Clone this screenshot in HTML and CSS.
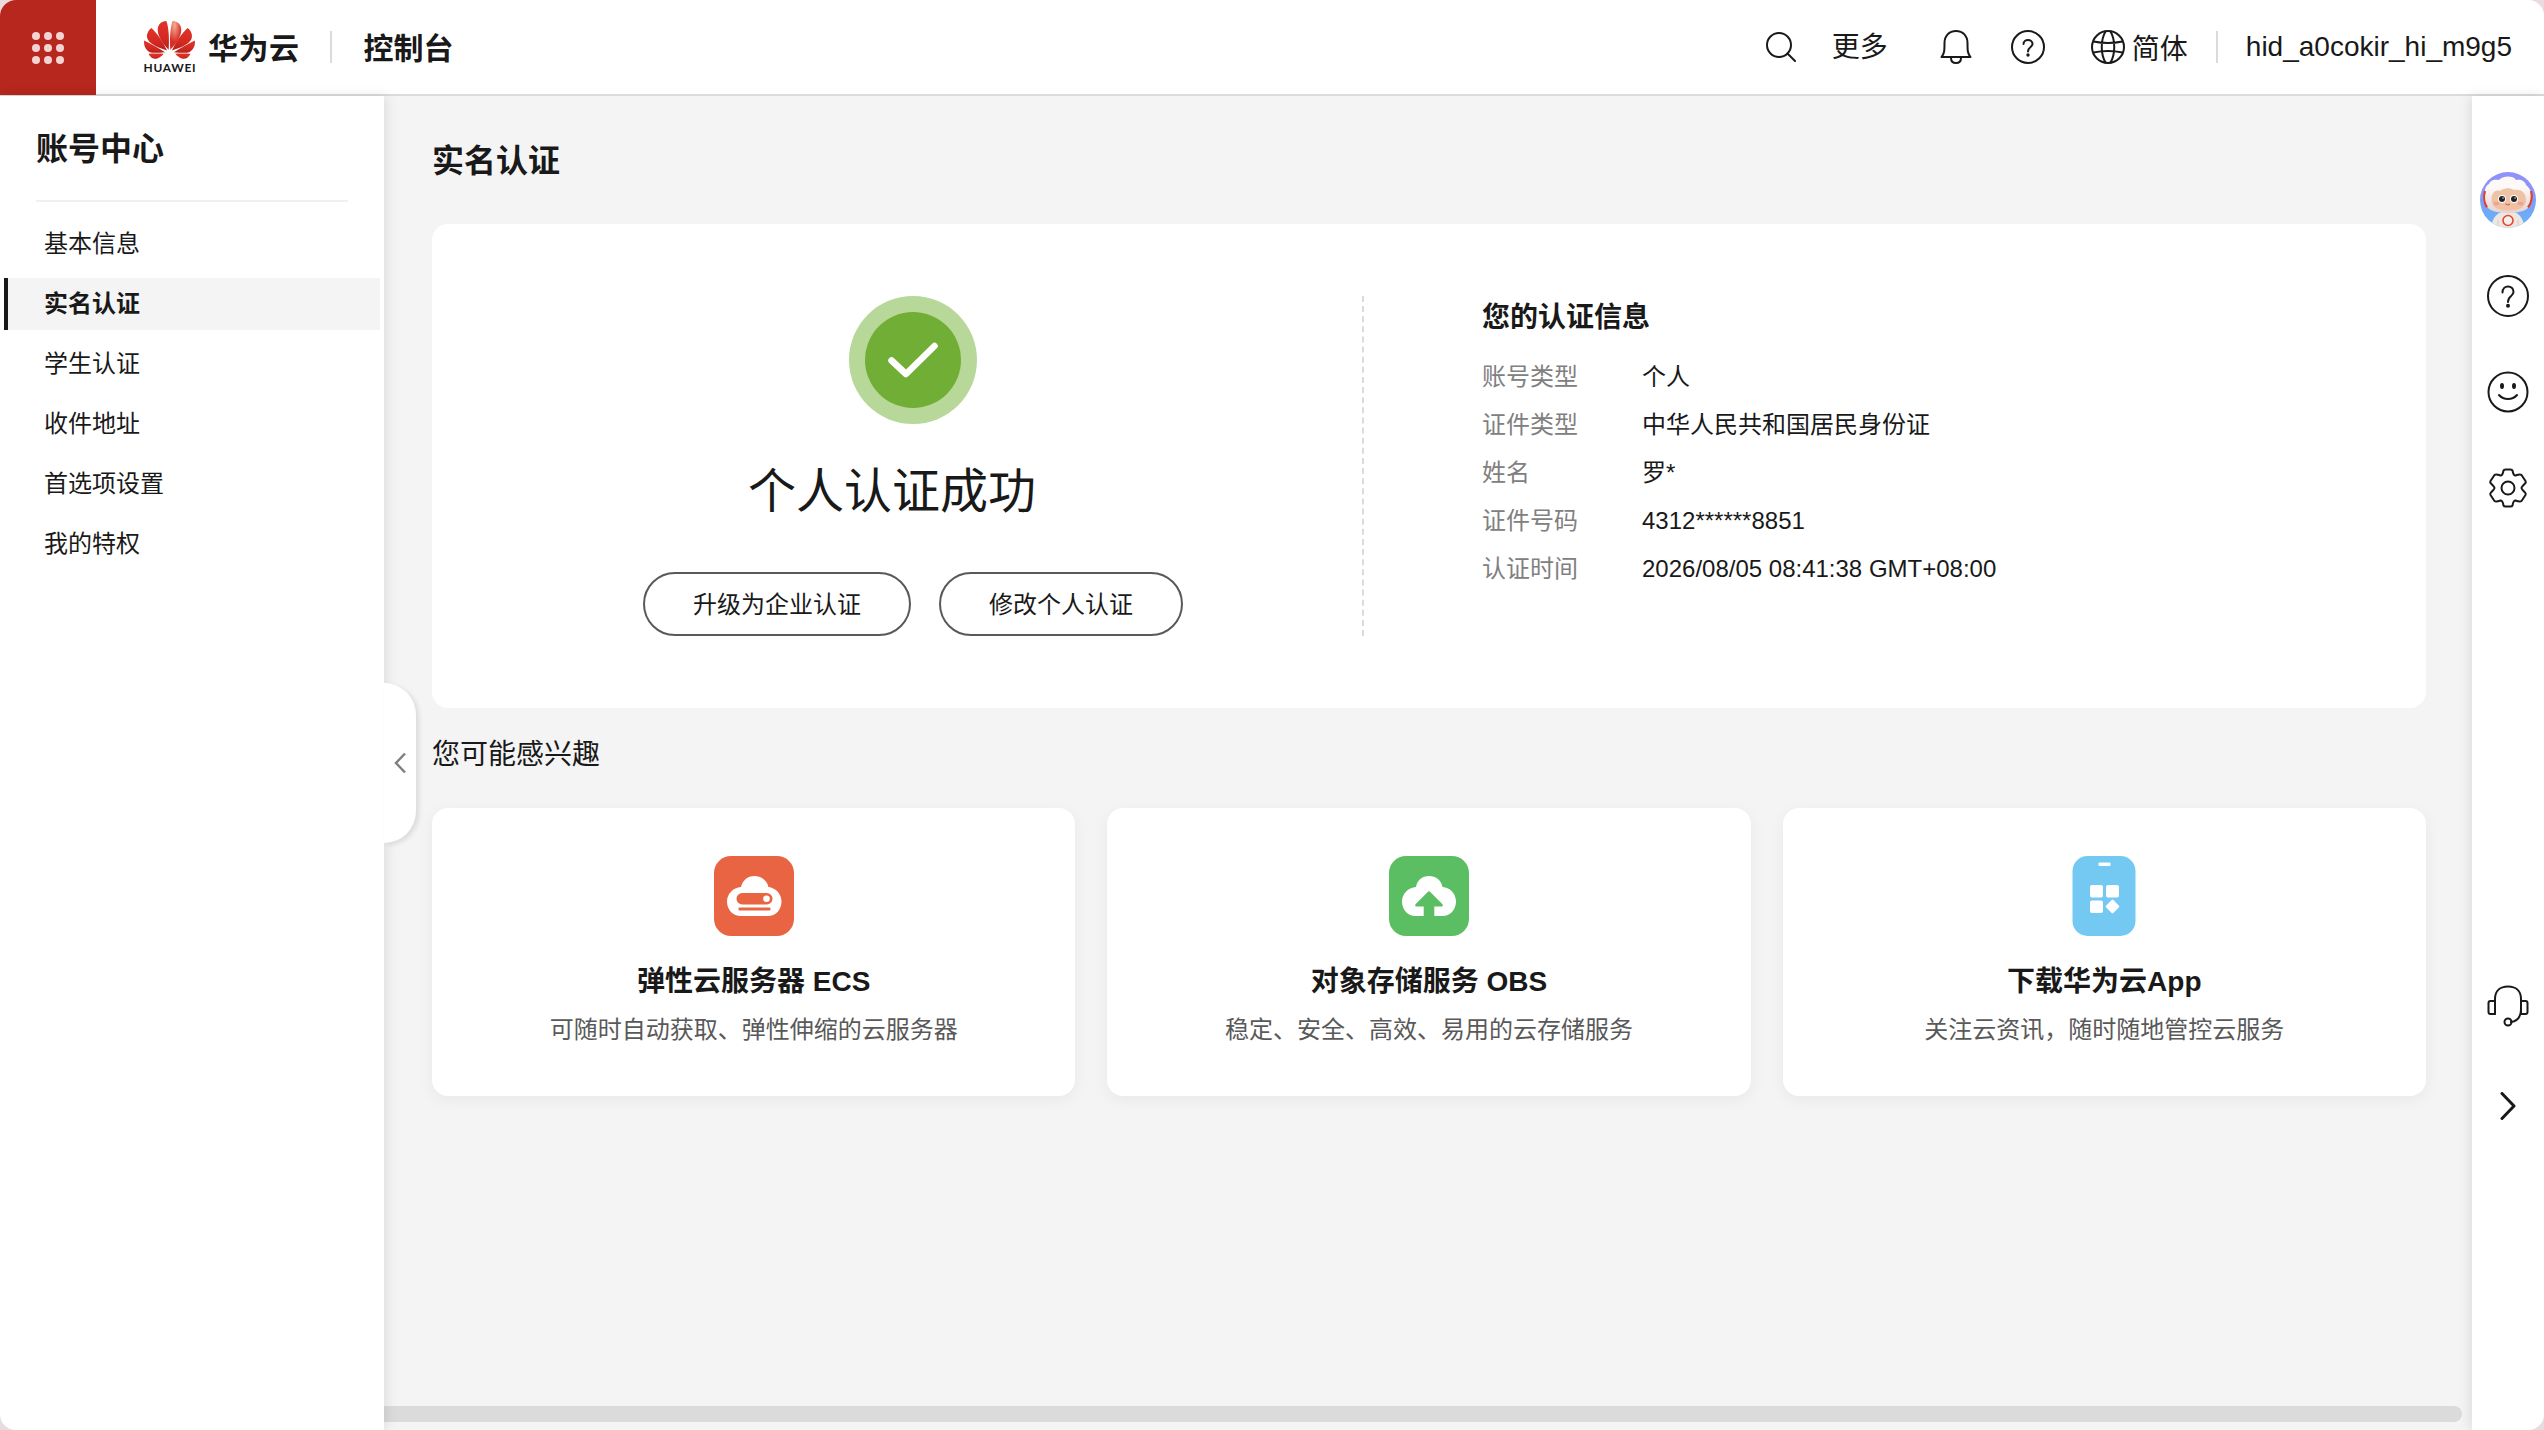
FILE: index.html
```html
<!DOCTYPE html>
<html lang="zh-CN">
<head>
    <meta charset="UTF-8">
    <meta name="viewport" content="width=device-width, initial-scale=1.0">
    <title>实名认证 - 华为云</title>
    <link rel="stylesheet" href="styles.css">
</head>
<body>
<div class="window">

    <header class="header">
        <div class="menu-button">
            <div class="dots">
                <i></i><i></i><i></i><i></i><i></i><i></i><i></i><i></i><i></i>
            </div>
        </div>
        <div class="brand">
            <svg class="logo" viewBox="432 63 153 157">
                <defs>
                    <linearGradient id="petal" x1="0" y1="0" x2="0" y2="1">
                        <stop offset="0" stop-color="#e0332a"/>
                        <stop offset="0.6" stop-color="#d42a22"/>
                        <stop offset="1" stop-color="#b3211b"/>
                    </linearGradient>
                    <radialGradient id="shine" cx="0.6" cy="0.15" r="0.6">
                        <stop offset="0" stop-color="#f0b196"/>
                        <stop offset="1" stop-color="#d92d25"/>
                    </radialGradient>
                </defs>
                <g fill="url(#petal)">
                    <path d="M506 150C508 118 507 84 499 63C484 64 472 73 473 92C474 113 491 134 506 150Z"/>
                    <path d="M501 152C490 127 472 101 454 84C443 92 437 106 443 119C452 136 480 145 501 152Z"/>
                    <path d="M495 157C478 146 453 132 432 122C430 137 436 150 449 157C460 161 480 158 495 157Z"/>
                    <path d="M491 162C477 161 461 161 445 162C450 172 459 179 469 177C478 175 485 169 491 162Z"/>
                    <g transform="translate(1017 0) scale(-1 1)">
                        <path fill="url(#shine)" d="M506 150C508 118 507 84 499 63C484 64 472 73 473 92C474 113 491 134 506 150Z"/>
                        <path d="M501 152C490 127 472 101 454 84C443 92 437 106 443 119C452 136 480 145 501 152Z"/>
                        <path d="M495 157C478 146 453 132 432 122C430 137 436 150 449 157C460 161 480 158 495 157Z"/>
                        <path d="M491 162C477 161 461 161 445 162C450 172 459 179 469 177C478 175 485 169 491 162Z"/>
                    </g>
                </g>
                <text class="logo-text" x="430" y="218.500" textLength="157">HUAWEI</text>
            </svg>
            <span class="brand-name">华为云</span>
        </div>
        <span class="divider"></span>
        <span class="console">控制台</span>

        <div class="tools">
            <svg class="icon search" width="30" height="32" viewBox="0 0 30 32">
                <circle cx="13" cy="14" r="12"/><path d="M21.5 22.5L29 30"/>
            </svg>
            <span class="more">更多</span>
            <svg class="icon bell" width="32" height="34" viewBox="0 0 32 34">
                <path d="M1.5 27H30.5C27.5 23 27.5 21 27.5 13C27.500 6 23 1 16 1S4.500 6 4.500 13C4.500 21 4.500 23 1.500 27ZM11 28C11 31 13 33 16 33S21 31 21 28"/>
            </svg>
            <svg class="icon help" width="34" height="34" viewBox="0 0 34 34">
                <circle cx="17" cy="17" r="16"/>
                <path d="M12.500 14C12.500 8.500 21.500 8.500 21.500 14C21.500 17 17 17 17 21.500"/>
                <circle class="dot" cx="17" cy="25" r="1.700"/>
            </svg>
            <div class="lang">
                <svg class="icon" width="34" height="34" viewBox="0 0 34 34">
                    <circle cx="17" cy="17" r="16"/>
                    <path d="M14.500 1.500C9.500 10 9.500 24 14.500 32.500M19.500 1.500C24.500 10 24.500 24 19.500 32.500M2.500 11.500Q17 14.500 31.500 11.500M2.500 22.500Q17 19.500 31.500 22.500"/>
                </svg>
                <span>简体</span>
            </div>
            <span class="divider"></span>
            <span class="username">hid_a0cokir_hi_m9g5</span>
        </div>
    </header>

    <div class="body">
        <nav class="sidebar">
            <h2>账号中心</h2>
            <ul>
                <li>基本信息</li>
                <li class="active">实名认证</li>
                <li>学生认证</li>
                <li>收件地址</li>
                <li>首选项设置</li>
                <li>我的特权</li>
            </ul>
            <div class="collapse">
                <svg width="14" height="22" viewBox="0 0 14 22"><path d="M12 1.500L3 11L12 20.500"/></svg>
            </div>
        </nav>

        <main class="main">
            <h1>实名认证</h1>

            <section class="card auth">
                <div class="auth-state">
                    <svg width="128" height="128" viewBox="0 0 128 128">
                        <circle cx="64" cy="64" r="64" fill="#b8d899"/>
                        <circle cx="64" cy="64" r="48" fill="#71ae35"/>
                        <path d="M42.500 64.500L57 78L85.500 50" fill="none" stroke="#fff" stroke-width="6.500" stroke-linecap="round" stroke-linejoin="round"/>
                    </svg>
                    <p class="auth-title">个人认证成功</p>
                    <div class="buttons">
                        <button>升级为企业认证</button>
                        <button>修改个人认证</button>
                    </div>
                </div>
                <div class="auth-info">
                    <h3>您的认证信息</h3>
                    <dl>
                        <dt>账号类型</dt><dd>个人</dd>
                        <dt>证件类型</dt><dd>中华人民共和国居民身份证</dd>
                        <dt>姓名</dt><dd>罗*</dd>
                        <dt>证件号码</dt><dd>4312******8851</dd>
                        <dt>认证时间</dt><dd>2026/08/05 08:41:38 GMT+08:00</dd>
                    </dl>
                </div>
            </section>

            <h4>您可能感兴趣</h4>

            <section class="products">
                <div class="card product">
                    <svg width="80" height="80" viewBox="0 0 80 80">
                        <rect width="80" height="80" rx="17" fill="#e96443"/>
                        <path fill="#fff" d="M27 31C28.500 24.500 33.500 20 40.500 20S53 24.500 54.500 31C62 32 67.500 38 67.500 45.500C67.500 54 61.500 60 54 60H27C19 60 13 54 13 45.500C13 38 19 31.500 27 31Z"/>
                        <rect x="22.500" y="37" width="36" height="11.500" rx="5.700" fill="#e96443"/>
                        <circle cx="52.500" cy="42.800" r="3.300" fill="#fff"/>
                        <rect x="24.500" y="51.500" width="32" height="3" rx="1" fill="#e96443"/>
                    </svg>
                    <h3>弹性云服务器 ECS</h3>
                    <p>可随时自动获取、弹性伸缩的云服务器</p>
                </div>
                <div class="card product">
                    <svg width="80" height="80" viewBox="0 0 80 80">
                        <rect width="80" height="80" rx="17" fill="#5cbe62"/>
                        <path fill="#fff" d="M27 31C28 24.500 33 20 40 20S52.500 24.500 53.500 31C61.500 31.500 67 38 67 45.500C67 54 61 60 53.500 60H26.500C19 60 13 54 13 45.500C13 38 19 31.500 27 31Z"/>
                        <path fill="#5cbe62" d="M38.500 36.200Q40 34.500 41.500 36.200L53.500 48.300Q54.500 50.500 52.500 50.500H45.300V61H34.700V50.500H27.500Q25.500 50.500 26.500 48.300Z"/>
                    </svg>
                    <h3>对象存储服务 OBS</h3>
                    <p>稳定、安全、高效、易用的云存储服务</p>
                </div>
                <div class="card product">
                    <svg width="64" height="80" viewBox="0 0 64 80">
                        <rect x="0.500" width="63" height="80" rx="15" fill="#73c9f2"/>
                        <g fill="#fff">
                            <rect x="26.500" y="6.500" width="12" height="3.500" rx="1"/>
                            <rect x="18" y="29" width="13" height="12.500" rx="2"/>
                            <rect x="34" y="29" width="13" height="12.500" rx="2"/>
                            <rect x="18" y="44.500" width="13" height="12.500" rx="2"/>
                            <rect x="35.300" y="45.300" width="10.400" height="10.400" rx="1.200" transform="rotate(45 40.500 50.500)"/>
                        </g>
                    </svg>
                    <h3>下载华为云App</h3>
                    <p>关注云资讯，随时随地管控云服务</p>
                </div>
            </section>

            <div class="scrollbar"></div>
        </main>

        <aside class="rail">
            <svg class="avatar" width="56" height="56" viewBox="0 0 56 56">
                <defs>
                    <linearGradient id="sky" x1="0" y1="0" x2="0" y2="1">
                        <stop offset="0.200" stop-color="#8f92f8"/>
                        <stop offset="1" stop-color="#5fb4f8"/>
                    </linearGradient>
                    <linearGradient id="hood" x1="0" y1="0" x2="0" y2="1">
                        <stop offset="0.300" stop-color="#fdf9f7"/>
                        <stop offset="1" stop-color="#e2d3d2"/>
                    </linearGradient>
                    <linearGradient id="face" x1="0" y1="0" x2="0" y2="1">
                        <stop offset="0" stop-color="#ecc4a6"/>
                        <stop offset="1" stop-color="#f2bfa4"/>
                    </linearGradient>
                    <clipPath id="round"><circle cx="28" cy="28" r="28"/></clipPath>
                </defs>
                <g clip-path="url(#round)">
                    <rect width="56" height="56" fill="url(#sky)"/>
                    <path fill="#efe6e2" d="M11 56C12 46 17 39 28 39S43 46 45 56Z"/>
                    <path fill="none" stroke="#d9cbc8" d="M18 56V48M38 56V48"/>
                    <path fill="url(#hood)" d="M4 27C4 18 6 13 9 12C10 8 15 7 19 8C22 4 33 3 36 8C41 7 45 9 46 13C50 16 52 21 52 28C51 37 43 41 28 41S4 37 4 27Z"/>
                    <path fill="none" stroke="#e0412f" stroke-width="2.200" d="M5 19C3.500 24 4 31 7 35.500M51 19C52.500 24 52 31 48 35.500"/>
                    <path fill="url(#face)" d="M11.500 28C11.500 20 16 17.500 20 19C24 15.500 30 15.500 34 18C40 17 46 20 46 28C46 35 39 38.500 28.500 38.500S11.500 35 11.500 28Z"/>
                    <g fill="#fff"><circle cx="22" cy="27" r="4"/><circle cx="34" cy="27" r="4"/></g>
                    <g fill="#23201f"><circle cx="22" cy="27" r="3"/><circle cx="34" cy="27" r="3"/></g>
                    <g fill="#fff"><circle cx="23" cy="26" r="0.700"/><circle cx="35" cy="26" r="0.700"/></g>
                    <g fill="#ee8f7c" opacity="0.600"><ellipse cx="16.500" cy="31.500" rx="3" ry="1.800"/><ellipse cx="40.500" cy="31.500" rx="3" ry="1.800"/></g>
                    <path fill="none" stroke="#b55a45" d="M25.500 32Q28 34 30 32"/>
                    <circle cx="28" cy="48.500" r="5" fill="#f7eeea" stroke="#e0492f" stroke-width="1.600"/>
                </g>
            </svg>
            <svg class="icon" width="42" height="42" viewBox="0 0 42 42">
                <circle cx="21" cy="21" r="20"/>
                <path d="M15.500 17.500C15.500 9.500 26.500 9.500 26.500 17C26.500 21.500 21 20.500 21 27"/>
                <circle class="dot" cx="21" cy="30.700" r="2"/>
            </svg>
            <svg class="icon" width="42" height="42" viewBox="0 0 42 42">
                <circle cx="21" cy="21" r="19.500"/>
                <ellipse class="dot" cx="15" cy="15" rx="2" ry="3"/>
                <ellipse class="dot" cx="27" cy="15" rx="2" ry="3"/>
                <path d="M12 24Q15.500 28 21 28T30 24"/>
            </svg>
            <svg class="icon" width="42" height="42" viewBox="0 0 42 42">
                <path d="M16.500 3.500Q17 2.500 18.500 2.500H23.500Q25 2.500 25.500 3.500Q26.300 8.500 28.500 8.500Q33 6.700 34.500 8L38.500 14Q39.200 15.500 38 16.500Q34.500 20 34.500 21Q34.500 22 38 25.500Q39.200 26.500 38.500 28L34.500 34Q33 35.300 28.500 33.500Q26.300 33.500 25.500 38.500Q25 39.500 23.500 39.500H18.500Q17 39.500 16.500 38.500Q15.700 33.500 13.500 33.500Q9 35.300 7.500 34L3.500 28Q2.800 26.500 4 25.500Q7.500 22 7.500 21Q7.500 20 4 16.500Q2.800 15.500 3.500 14L7.500 8Q9 6.700 13.500 8.500Q15.700 8.500 16.500 3.500Z"/>
                <circle cx="21" cy="21" r="6.500"/>
            </svg>
            <svg class="icon headset" width="42" height="42" viewBox="0 0 42 42">
                <path d="M8 29V14C8 6 13 1.500 21 1.500S34 6 34 14V24C34 32 31 36 24 37"/>
                <path d="M8 16H3.500Q1.500 16 1.500 18V27Q1.500 29 3.500 29H8ZM34 16H38.500Q40.500 16 40.500 18V27Q40.500 29 38.500 29H34Z"/>
                <circle cx="21" cy="37" r="3.500"/>
            </svg>
            <svg class="icon arrow" width="16" height="28" viewBox="0 0 16 28"><path d="M2 1.500L14 14L2 26.500"/></svg>
        </aside>
    </div>
</div>
</body>
</html>
```

FILE: styles.css
```css
* {
    box-sizing: border-box;
    margin: 0;
    padding: 0;
}
body {
    font-family: "Liberation Sans", "Noto Sans CJK SC", sans-serif;
    color: #191919;
    background-color: #eadcdc;
    height: 100vh;
    overflow: hidden;
}
.window {
    height: 100vh;
    display: flex;
    flex-direction: column;
    border-radius: 16px;
    overflow: hidden;
    background-color: #f4f4f4;
}
svg {
    display: block;
    flex-shrink: 0;
}
.icon {
    fill: none;
    stroke: #191919;
    stroke-width: 2;
    stroke-linecap: round;
    stroke-linejoin: round;
}
.icon .dot {
    fill: #191919;
    stroke: none;
}

/* 顶部导航 */
.header {
    height: 96px;
    display: flex;
    align-items: center;
    background-color: #fff;
    border-bottom: 2px solid #dbdbdb;
    flex-shrink: 0;
}
.menu-button {
    width: 96px;
    height: 95px;
    align-self: flex-start;
    display: flex;
    align-items: center;
    justify-content: center;
    background-color: #b7271d;
}
.dots {
    display: grid;
    grid-template-columns: repeat(3, 8px);
    gap: 4px;
}
.dots i {
    height: 8px;
    border-radius: 50%;
    background-color: #f2d4d4;
}
.brand {
    display: flex;
    align-items: center;
    margin-left: 48px;
}
.logo {
    width: 51px;
    height: 52px;
    overflow: visible;
}
.logo-text {
    font-size: 36px;
    font-family: Lato, sans-serif;
    font-weight: bold;
    fill: #191919;
}
.brand-name {
    margin-left: 13px;
    padding-top: 3px;
    font-size: 30px;
    font-weight: bold;
    line-height: 40px;
    letter-spacing: 0.5px;
}
.divider {
    width: 2px;
    height: 32px;
    background-color: #dbdbdb;
}
.brand + .divider {
    margin-left: 30px;
}
.console {
    margin-left: 32px;
    padding-top: 3px;
    font-size: 30px;
    font-weight: bold;
    line-height: 40px;
}
.tools {
    margin-left: auto;
    padding-right: 32px;
    display: flex;
    align-items: center;
    font-size: 28px;
    line-height: 40px;
}
.more {
    margin-left: 36px;
    padding-top: 1px;
}
.bell {
    margin-left: 52px;
}
.help {
    margin-left: 39px;
}
.lang {
    margin-left: 46px;
    display: flex;
    align-items: center;
    gap: 7px;
}
.lang span {
    padding-top: 5px;
}
.tools .divider {
    margin: 0 28px;
}

.body {
    flex: 1;
    display: flex;
    min-height: 0;
}

/* 左侧菜单 */
.sidebar {
    position: relative;
    z-index: 1;
    width: 384px;
    flex-shrink: 0;
    background-color: #fff;
    box-shadow: 2px 0 12px rgba(0, 0, 0, 0.1);
}
.sidebar h2 {
    margin: 0 36px 16px;
    padding-top: 33px;
    height: 106px;
    font-size: 32px;
    line-height: 40px;
    border-bottom: 2px solid #f0f0f0;
}
.sidebar ul {
    list-style: none;
    padding: 0 4px;
    display: flex;
    flex-direction: column;
    gap: 8px;
}
.sidebar li {
    height: 52px;
    padding-left: 36px;
    border-left: 4px solid transparent;
    font-size: 24px;
    line-height: 52px;
}
.sidebar .active {
    font-weight: bold;
    border-left-color: #191919;
    background-color: #f4f4f4;
}
.collapse {
    position: absolute;
    top: 587px;
    left: 384px;
    width: 32px;
    height: 160px;
    border-radius: 0 32px 32px 0;
    display: flex;
    align-items: center;
    padding-left: 9px;
    background-color: #fff;
    box-shadow: 3px 2px 5px rgba(0, 0, 0, 0.1);
}
.collapse path {
    fill: none;
    stroke: #808080;
    stroke-width: 2.5;
}

/* 主体内容 */
.main {
    flex: 1;
    display: flex;
    flex-direction: column;
    padding: 41px 46px 8px 48px;
}
.main h1 {
    font-size: 32px;
    line-height: 48px;
    margin-bottom: 39px;
}
.card {
    background-color: #fff;
    border-radius: 16px;
}
.auth {
    height: 484px;
    padding: 72px 32px;
    display: flex;
}
.auth-state {
    width: 900px;
    display: flex;
    flex-direction: column;
    align-items: center;
    border-right: 2px dashed #dbdbdb;
}
.auth-title {
    margin: 36px 42px 0 0;
    font-size: 48px;
    line-height: 64px;
}
.buttons {
    display: flex;
    gap: 28px;
    margin-top: auto;
}
.buttons button {
    height: 64px;
    padding: 0 48px 3px;
    border: 2px solid #595959;
    border-radius: 32px;
    background-color: #fff;
    color: #191919;
    font-family: inherit;
    font-size: 24px;
}
.auth-info {
    margin-left: 118px;
    padding-top: 2px;
}
.auth-info h3 {
    font-size: 28px;
    line-height: 40px;
    margin-bottom: 15px;
}
.auth-info dl {
    display: grid;
    grid-template-columns: 160px auto;
    font-size: 24px;
    line-height: 48px;
}
.auth-info dt {
    color: #808080;
}
.main h4 {
    margin: 27px 0 33px;
    font-size: 28px;
    font-weight: normal;
    line-height: 40px;
}
.products {
    display: grid;
    grid-template-columns: repeat(3, 1fr);
    gap: 32px;
}
.product {
    height: 288px;
    padding-top: 48px;
    display: flex;
    flex-direction: column;
    align-items: center;
    box-shadow: 0 4px 16px rgba(0, 0, 0, 0.05);
}
.product h3 {
    margin-top: 26px;
    font-size: 28px;
    line-height: 40px;
}
.product p {
    margin-top: 10px;
    color: #595959;
    font-size: 24px;
    line-height: 36px;
}
.scrollbar {
    height: 16px;
    margin: auto -36px 0 -48px;
    border-radius: 0 8px 8px 0;
    background-color: #dbdbdb;
}

/* 右侧工具栏 */
.rail {
    width: 72px;
    display: flex;
    flex-direction: column;
    align-items: center;
    padding-top: 76px;
    gap: 54px;
    background-color: #fff;
    box-shadow: -2px 0 12px rgba(0, 0, 0, 0.1);
}
.rail .avatar {
    margin-bottom: -7px;
}
.rail .headset {
    margin-top: 422px;
}
.rail .arrow {
    margin-top: 11px;
    stroke-width: 3;
}
```
